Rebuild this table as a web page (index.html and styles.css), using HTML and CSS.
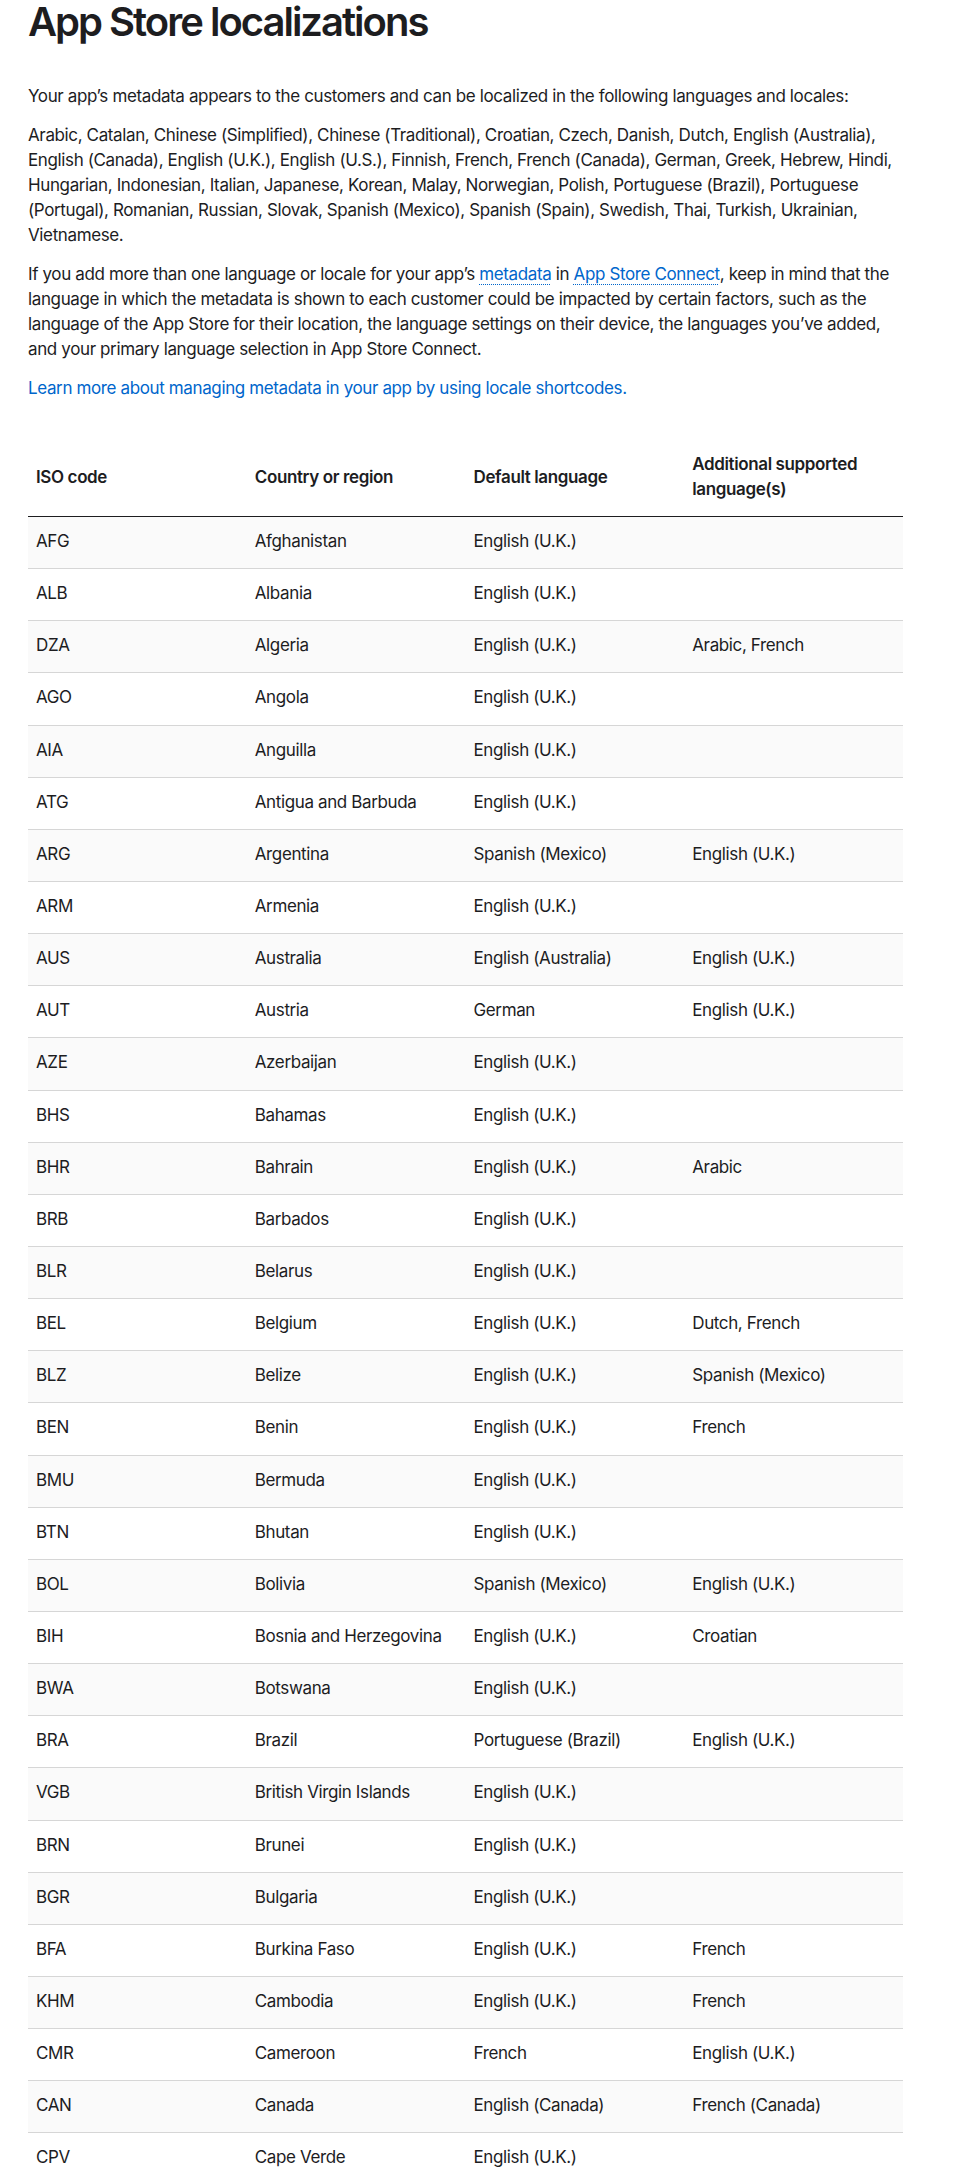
FILE: index.html
```html
<!DOCTYPE html>
<html lang="en">
<head>
<meta charset="utf-8">
<title>App Store localizations</title>
<link rel="stylesheet" href="styles.css">
</head>
<body>
<main class="page">
  <h1 class="title">App Store localizations</h1>
  <p class="para">Your app’s metadata appears to the customers and can be localized in the following languages and locales:</p>
  <p class="para">Arabic, Catalan, Chinese (Simplified), Chinese (Traditional), Croatian, Czech, Danish, Dutch, English (Australia), English (Canada), English (U.K.), English (U.S.), Finnish, French, French (Canada), German, Greek, Hebrew, Hindi, Hungarian, Indonesian, Italian, Japanese, Korean, Malay, Norwegian, Polish, Portuguese (Brazil), Portuguese (Portugal), Romanian, Russian, Slovak, Spanish (Mexico), Spanish (Spain), Swedish, Thai, Turkish, Ukrainian, Vietnamese.</p>
  <p class="para">If you add more than one language or locale for your app’s <a class="dotted" href="#">metadata</a> in <a class="dotted" href="#">App Store Connect</a>, keep in mind that the language in which the metadata is shown to each customer could be impacted by certain factors, such as the language of the App Store for their location, the language settings on their device, the languages you’ve added, and your primary language selection in App Store Connect.</p>
  <p class="para"><a class="plain" href="#">Learn more about managing metadata in your app by using locale shortcodes.</a></p>

  <table class="loc-table">
    <thead>
      <tr>
        <th>ISO code</th>
        <th>Country or region</th>
        <th>Default language</th>
        <th>Additional supported language(s)</th>
      </tr>
    </thead>
    <tbody>
      <tr><td>AFG</td><td>Afghanistan</td><td>English (U.K.)</td><td></td></tr>
      <tr><td>ALB</td><td>Albania</td><td>English (U.K.)</td><td></td></tr>
      <tr><td>DZA</td><td>Algeria</td><td>English (U.K.)</td><td>Arabic, French</td></tr>
      <tr><td>AGO</td><td>Angola</td><td>English (U.K.)</td><td></td></tr>
      <tr><td>AIA</td><td>Anguilla</td><td>English (U.K.)</td><td></td></tr>
      <tr><td>ATG</td><td>Antigua and Barbuda</td><td>English (U.K.)</td><td></td></tr>
      <tr><td>ARG</td><td>Argentina</td><td>Spanish (Mexico)</td><td>English (U.K.)</td></tr>
      <tr><td>ARM</td><td>Armenia</td><td>English (U.K.)</td><td></td></tr>
      <tr><td>AUS</td><td>Australia</td><td>English (Australia)</td><td>English (U.K.)</td></tr>
      <tr><td>AUT</td><td>Austria</td><td>German</td><td>English (U.K.)</td></tr>
      <tr><td>AZE</td><td>Azerbaijan</td><td>English (U.K.)</td><td></td></tr>
      <tr><td>BHS</td><td>Bahamas</td><td>English (U.K.)</td><td></td></tr>
      <tr><td>BHR</td><td>Bahrain</td><td>English (U.K.)</td><td>Arabic</td></tr>
      <tr><td>BRB</td><td>Barbados</td><td>English (U.K.)</td><td></td></tr>
      <tr><td>BLR</td><td>Belarus</td><td>English (U.K.)</td><td></td></tr>
      <tr><td>BEL</td><td>Belgium</td><td>English (U.K.)</td><td>Dutch, French</td></tr>
      <tr><td>BLZ</td><td>Belize</td><td>English (U.K.)</td><td>Spanish (Mexico)</td></tr>
      <tr><td>BEN</td><td>Benin</td><td>English (U.K.)</td><td>French</td></tr>
      <tr><td>BMU</td><td>Bermuda</td><td>English (U.K.)</td><td></td></tr>
      <tr><td>BTN</td><td>Bhutan</td><td>English (U.K.)</td><td></td></tr>
      <tr><td>BOL</td><td>Bolivia</td><td>Spanish (Mexico)</td><td>English (U.K.)</td></tr>
      <tr><td>BIH</td><td>Bosnia and Herzegovina</td><td>English (U.K.)</td><td>Croatian</td></tr>
      <tr><td>BWA</td><td>Botswana</td><td>English (U.K.)</td><td></td></tr>
      <tr><td>BRA</td><td>Brazil</td><td>Portuguese (Brazil)</td><td>English (U.K.)</td></tr>
      <tr><td>VGB</td><td>British Virgin Islands</td><td>English (U.K.)</td><td></td></tr>
      <tr><td>BRN</td><td>Brunei</td><td>English (U.K.)</td><td></td></tr>
      <tr><td>BGR</td><td>Bulgaria</td><td>English (U.K.)</td><td></td></tr>
      <tr><td>BFA</td><td>Burkina Faso</td><td>English (U.K.)</td><td>French</td></tr>
      <tr><td>KHM</td><td>Cambodia</td><td>English (U.K.)</td><td>French</td></tr>
      <tr><td>CMR</td><td>Cameroon</td><td>French</td><td>English (U.K.)</td></tr>
      <tr><td>CAN</td><td>Canada</td><td>English (Canada)</td><td>French (Canada)</td></tr>
      <tr><td>CPV</td><td>Cape Verde</td><td>English (U.K.)</td><td></td></tr>
    </tbody>
  </table>
</main>
</body>
</html>
```
FILE: styles.css
```css
html, body {
  margin: 0;
  padding: 0;
  background: #ffffff;
}

body {
  font-family: Inter, "Liberation Sans", sans-serif;
  color: #1d1d1f;
  font-size: 17px;
  line-height: 25px;
  letter-spacing: -0.374px;
}

.page {
  width: 875px;
  padding-left: 28px;
}

.title {
  margin: 0;
  font-size: 40px;
  line-height: 44px;
  font-weight: 600;
  letter-spacing: -2px;
}

.para {
  margin: 14px 0 0;
}

.title + .para {
  margin-top: 40px;
}

a {
  color: #0066cc;
  text-decoration: none;
}

.dotted {
  text-decoration: underline dotted;
  text-decoration-thickness: 1px;
  text-underline-offset: 4px;
}

.loc-table {
  width: 875px;
  margin-top: 38px;
  border-collapse: collapse;
  table-layout: fixed;
}

.loc-table th,
.loc-table td {
  width: 25%;
  text-align: left;
  padding: 12px 8px 14.15px;
  vertical-align: middle;
}

.loc-table th {
  font-weight: 600;
  padding: 13px 8px 14px;
  border-bottom: 1px solid #1d1d1f;
}

.loc-table td {
  border-bottom: 1px solid #d6d6d6;
}

.loc-table tbody tr:nth-child(odd) {
  background: #fafafa;
}
```
